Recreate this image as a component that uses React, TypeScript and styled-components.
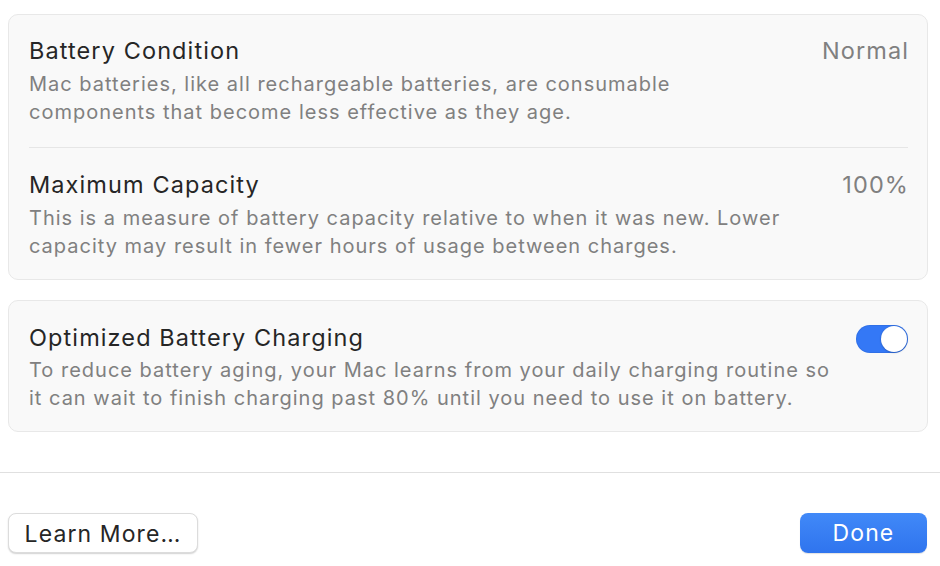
import React from "react";
import styled, { createGlobalStyle } from "styled-components";

const Global = createGlobalStyle`
  html, body { margin: 0; padding: 0; background: #ffffff; }
  body { font-family: Inter, "Noto Sans", "Liberation Sans", sans-serif; -webkit-font-smoothing: antialiased; }
  * { box-sizing: border-box; }
`;

const Page = styled.div`
  width: 940px;
  height: 566px;
  display: flex;
  flex-direction: column;
  background: #ffffff;
  overflow: hidden;
`;

const Content = styled.div`
  display: flex;
  flex-direction: column;
  gap: 20px;
  padding: 14px 12px 0 8px;
`;

const Card = styled.div`
  background: #f9f9f9;
  border: 1px solid #e8e8e8;
  border-radius: 10px;
  padding: 0 19px 0 20px;
`;

const Section = styled.div<{ $top: number; $bottom: number; $divider?: boolean }>`
  display: flex;
  align-items: flex-start;
  gap: 20px;
  padding: ${(p) => p.$top}px 0 ${(p) => p.$bottom}px;
  border-top: ${(p) => (p.$divider ? "1px solid #e6e6e6" : "none")};
`;

const Text = styled.div`
  flex: 1;
  min-width: 0;
`;

const Title = styled.div`
  font-size: 23.5px;
  line-height: 28px;
  color: #262626;
  letter-spacing: 1.1px;
`;

const Desc = styled.div<{ $gap?: number }>`
  margin-top: ${(p) => p.$gap ?? 5}px;
  font-size: 20px;
  line-height: 28px;
  color: #808080;
  white-space: nowrap;
  letter-spacing: 1px;
`;

const Value = styled.div`
  font-size: 23.5px;
  line-height: 28px;
  color: #808080;
  letter-spacing: 1.1px;
  margin-right: -1px;
`;

const Toggle = styled.div<{ $on: boolean }>`
  position: relative;
  width: 52px;
  height: 28px;
  margin-top: 1px;
  border-radius: 14px;
  background: ${(p) => (p.$on ? "#3478f6" : "#e0e0e0")};
  box-shadow: inset 0 0 0 1px rgba(0, 0, 0, 0.06);
  flex-shrink: 0;
`;

const Knob = styled.div<{ $on: boolean }>`
  position: absolute;
  top: 1px;
  left: ${(p) => (p.$on ? "25px" : "1px")};
  width: 26px;
  height: 26px;
  border-radius: 50%;
  background: #ffffff;
  box-shadow: 0 0.5px 2px rgba(0, 0, 0, 0.3);
`;

const Separator = styled.div`
  margin-top: 40px;
  height: 1px;
  background: #e0e0e0;
`;

const Footer = styled.div`
  display: flex;
  justify-content: space-between;
  align-items: center;
  padding: 40px 13px 0 8px;
`;

const Button = styled.button<{ $primary?: boolean }>`
  height: 40px;
  padding: 0;
  border-radius: 8px;
  font-family: inherit;
  font-size: 23px;
  line-height: 40px;
  letter-spacing: 1.1px;
  cursor: default;
  border: ${(p) => (p.$primary ? "none" : "1px solid #dcdcdc")};
  color: ${(p) => (p.$primary ? "#ffffff" : "#262626")};
  background: ${(p) =>
    p.$primary ? "linear-gradient(#4189f8, #2f74ee)" : "#ffffff"};
  box-shadow: ${(p) =>
    p.$primary
      ? "0 1px 1px rgba(0,0,0,0.12)"
      : "0 1px 1.5px rgba(0,0,0,0.18)"};
`;

const LearnButton = styled(Button)`
  width: 190px;
`;

const DoneButton = styled(Button)`
  width: 127px;
`;

export default function App() {
  return (
    <Page>
      <Global />
      <Content>
        <Card>
          <Section $top={22} $bottom={21}>
            <Text>
              <Title>Battery Condition</Title>
              <Desc>
                Mac batteries, like all rechargeable batteries, are consumable
                <br />
                components that become less effective as they age.
              </Desc>
            </Text>
            <Value>Normal</Value>
          </Section>
          <Section $top={23} $bottom={19} $divider>
            <Text>
              <Title>Maximum Capacity</Title>
              <Desc>
                This is a measure of battery capacity relative to when it was new. Lower
                <br />
                capacity may result in fewer hours of usage between charges.
              </Desc>
            </Text>
            <Value>100%</Value>
          </Section>
        </Card>
        <Card>
          <Section $top={23} $bottom={19}>
            <Text>
              <Title>Optimized Battery Charging</Title>
              <Desc $gap={4}>
                To reduce battery aging, your Mac learns from your daily charging routine so
                <br />
                it can wait to finish charging past 80% until you need to use it on battery.
              </Desc>
            </Text>
            <Toggle $on>
              <Knob $on />
            </Toggle>
          </Section>
        </Card>
      </Content>
      <Separator />
      <Footer>
        <LearnButton>Learn More…</LearnButton>
        <DoneButton $primary>Done</DoneButton>
      </Footer>
    </Page>
  );
}
